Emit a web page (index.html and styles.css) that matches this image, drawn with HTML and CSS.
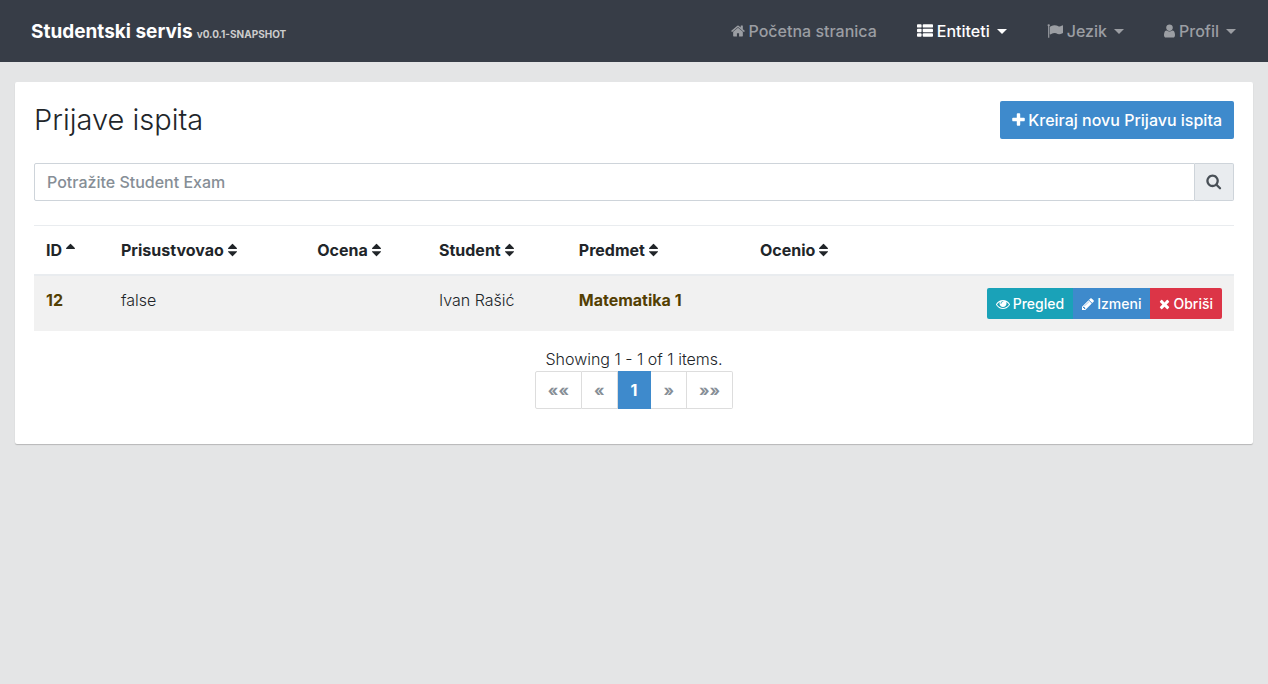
FILE: index.html
```html
<!DOCTYPE html>
<html lang="sr-Latn">
<head>
<meta charset="utf-8">
<meta name="viewport" content="width=device-width, initial-scale=1">
<title>Prijave ispita</title>
<link rel="stylesheet" href="styles.css">
</head>
<body>
<svg class="sprite" aria-hidden="true">
  <symbol id="home" viewBox="64 0 1664 1792"><path d="M1472 992v480q0 26-19 45t-45 19h-384v-384h-256v384h-384q-26 0-45-19t-19-45v-480q0-1 .5-3t.5-3l575-474 575 474q1 2 1 6zm223-69l-62 74q-8 9-21 11h-3q-13 0-21-7l-692-577-692 577q-12 8-24 7-13-2-21-11l-62-74q-8-10-7-23.5t11-21.5l719-599q32-26 76-26t76 26l244 204v-195q0-14 9-23t23-9h192q14 0 23 9t9 23v408l219 182q10 8 11 21.5t-7 23.5z"/></symbol>
  <symbol id="list" viewBox="0 0 1792 1792"><rect x="0" y="128" width="512" height="384" rx="96"/><rect x="0" y="640" width="512" height="384" rx="96"/><rect x="0" y="1152" width="512" height="384" rx="96"/><rect x="640" y="128" width="1152" height="384" rx="96"/><rect x="640" y="640" width="1152" height="384" rx="96"/><rect x="640" y="1152" width="1152" height="384" rx="96"/></symbol>
  <symbol id="flag" viewBox="0 0 1792 1792"><path d="M320 256q0 72-64 110v1266q0 13-9.500 22.500t-22.500 9.500h-64q-13 0-22.500-9.500t-9.500-22.500v-1266q-64-38-64-110 0-53 37.500-90.500t90.500-37.500 90.500 37.500 37.500 90.500zm1472 64v763q0 25-12.500 38.500t-39.500 27.500q-215 116-369 116-61 0-123.500-22t-108.500-48-115.500-48-142.500-22q-192 0-464 146-17 9-33 9-26 0-45-19t-19-45v-742q0-32 31-55 21-14 79-43 236-120 421-120 107 0 200 29t219 88q38 19 88 19 54 0 117.500-21t110-47 88-47 54.500-21q26 0 45 19t19 45z"/></symbol>
  <symbol id="user" viewBox="256 0 1280 1792"><path d="M1536 1399q0 109-62.500 187t-150.500 78h-854q-88 0-150.500-78t-62.500-187q0-85 8.500-160.500t31.500-152 58.500-131 94-89 134.500-34.500q131 128 313 128t313-128q76 0 134.500 34.500t94 89 58.500 131 31.500 152 8.500 160.500zm-256-887q0 159-112.500 271.500t-271.500 112.500-271.500-112.500-112.500-271.500 112.500-271.500 271.500-112.500 271.500 112.500 112.500 271.500z"/></symbol>
  <symbol id="plus" viewBox="192 0 1408 1792"><path d="M1600 736v192q0 40-28 68t-68 28h-416v416q0 40-28 68t-68 28h-192q-40 0-68-28t-28-68v-416h-416q-40 0-68-28t-28-68v-192q0-40 28-68t68-28h416v-416q0-40 28-68t68-28h192q40 0 68 28t28 68v416h416q40 0 68 28t28 68z"/></symbol>
  <symbol id="search" viewBox="64 64 1728 1792"><path d="M1216 832q0-185-131.500-316.500t-316.500-131.500-316.500 131.500-131.500 316.500 131.500 316.500 316.500 131.500 316.500-131.500 131.500-316.500zm512 832q0 52-38 90t-90 38q-54 0-90-38l-343-342q-179 124-399 124-143 0-273.500-55.500t-225-150-150-225-55.500-273.500 55.500-273.500 150-225 225-150 273.500-55.500 273.500 55.500 225 150 150 225 55.500 273.500q0 220-124 399l343 343q37 37 37 90z"/></symbol>
  <symbol id="sort" viewBox="384 0 1024 1792"><path d="M1408 1088q0 26-19 45l-448 448q-19 19-45 19t-45-19l-448-448q-19-19-19-45t19-45 45-19h896q26 0 45 19t19 45zm0-384q0 26-19 45t-45 19h-896q-26 0-45-19t-19-45 19-45l448-448q19-19 45-19t45 19l448 448q19 19 19 45z"/></symbol>
  <symbol id="sort-asc" viewBox="384 0 1024 1792"><path d="M1408 704q0 26-19 45t-45 19h-896q-26 0-45-19t-19-45 19-45l448-448q19-19 45-19t45 19l448 448q19 19 19 45z"/></symbol>
  <symbol id="eye" viewBox="0 0 1792 1792"><path d="M1664 960q-152-236-381-353 61 104 61 225 0 185-131.500 316.500t-316.500 131.500-316.500-131.500-131.500-316.500q0-121 61-225-229 117-381 353 133 205 333.500 326.500t434.500 121.500 434.500-121.500 333.500-326.500zm-720-384q0-20-14-34t-34-14q-125 0-214.500 89.500t-89.500 214.500q0 20 14 34t34 14 34-14 14-34q0-86 61-147t147-61q20 0 34-14t14-34zm848 384q0 34-20 69-140 230-376.500 368.500t-499.500 138.500-499.500-139-376.500-368q-20-35-20-69t20-69q140-229 376.500-368t499.500-139 499.500 139 376.500 368q20 35 20 69z"/></symbol>
  <symbol id="pencil" viewBox="128 0 1536 1792"><path d="M491 1536l91-91-235-235-91 91v107h128v128h107zm523-928q0-22-22-22-10 0-17 7l-542 542q-7 7-7 17 0 22 22 22 10 0 17-7l542-542q7-7 7-17zm-54-192l416 416-832 832h-416v-416zm683 96q0 53-37 90l-166 166-416-416 166-165q36-38 90-38 53 0 91 38l235 234q37 39 37 91z"/></symbol>
  <symbol id="times" viewBox="192 0 1408 1792"><path d="M1490 1322q0 40-28 68l-136 136q-28 28-68 28t-68-28l-294-294-294 294q-28 28-68 28t-68-28l-136-136q-28-28-28-68t28-68l294-294-294-294q-28-28-28-68t28-68l136-136q28-28 68-28t68 28l294 294 294-294q28-28 68-28t68 28l136 136q28 28 28 68t-28 68l-294 294 294 294q28 28 28 68z"/></symbol>
</svg>

<header class="navbar">
  <a class="brand" href="#"><span class="brand-name">Studentski servis</span> <span class="brand-version">v0.0.1-SNAPSHOT</span></a>
  <nav class="nav">
    <a class="nav-link" href="#"><svg class="icon icon-14"><use href="#home"/></svg>Početna stranica</a>
    <button class="nav-link active" type="button"><svg class="icon icon-16"><use href="#list"/></svg>Entiteti<span class="caret"></span></button>
    <button class="nav-link" type="button"><svg class="icon icon-16"><use href="#flag"/></svg>Jezik<span class="caret"></span></button>
    <button class="nav-link" type="button"><svg class="icon icon-11"><use href="#user"/></svg>Profil<span class="caret"></span></button>
  </nav>
</header>

<main class="card">
  <div class="card-head">
    <h1 class="title">Prijave ispita</h1>
    <button class="btn btn-primary" type="button"><svg class="icon icon-13"><use href="#plus"/></svg>Kreiraj novu Prijavu ispita</button>
  </div>

  <form class="search">
    <input class="search-input" type="text" placeholder="Potražite Student Exam" aria-label="Potražite Student Exam">
    <button class="search-btn" type="button" aria-label="Pretraga"><svg class="icon icon-16"><use href="#search"/></svg></button>
  </form>

  <table class="table">
    <thead>
      <tr>
        <th class="col-id">ID <svg class="icon icon-9"><use href="#sort-asc"/></svg></th>
        <th class="col-present">Prisustvovao <svg class="icon icon-9"><use href="#sort"/></svg></th>
        <th class="col-grade">Ocena <svg class="icon icon-9"><use href="#sort"/></svg></th>
        <th class="col-student">Student <svg class="icon icon-9"><use href="#sort"/></svg></th>
        <th class="col-subject">Predmet <svg class="icon icon-9"><use href="#sort"/></svg></th>
        <th class="col-grader">Ocenio <svg class="icon icon-9"><use href="#sort"/></svg></th>
        <th></th>
      </tr>
    </thead>
    <tbody>
      <tr>
        <td><a class="link" href="#">12</a></td>
        <td>false</td>
        <td></td>
        <td>Ivan Rašić</td>
        <td><a class="link" href="#">Matematika 1</a></td>
        <td></td>
        <td class="actions">
          <div class="btn-group">
            <button class="btn btn-sm btn-info" type="button"><svg class="icon icon-14"><use href="#eye"/></svg>Pregled</button>
            <button class="btn btn-sm btn-primary" type="button"><svg class="icon icon-12"><use href="#pencil"/></svg>Izmeni</button>
            <button class="btn btn-sm btn-danger" type="button"><svg class="icon icon-11"><use href="#times"/></svg>Obriši</button>
          </div>
        </td>
      </tr>
    </tbody>
  </table>

  <footer class="pager">
    <div>Showing 1 - 1 of 1 items.</div>
    <nav class="pagination" aria-label="Stranice">
      <a class="page" href="#">««</a>
      <a class="page" href="#">«</a>
      <a class="page current" href="#">1</a>
      <a class="page" href="#">»</a>
      <a class="page" href="#">»»</a>
    </nav>
  </footer>
</main>
</body>
</html>
```
FILE: styles.css
```css
* {
  box-sizing: border-box;
}

body {
  margin: 0;
  background: #e4e5e6;
  color: #212529;
  font: 300 16px/24px Inter, "Liberation Sans", sans-serif;
}

button,
input {
  font: inherit;
}

button {
  cursor: pointer;
}

a {
  text-decoration: none;
}

.sprite {
  display: none;
}

.icon {
  height: 16px;
  fill: currentColor;
  flex: none;
}

.icon-9 { width: 9px; }
.icon-11 { width: 11px; }
.icon-12 { width: 12px; }
.icon-13 { width: 13px; }
.icon-14 { width: 14px; }
.icon-16 { width: 16px; }

/* Top bar */
.navbar {
  display: flex;
  align-items: center;
  justify-content: space-between;
  min-height: 62px;
  padding: 0 32px 0 31px;
  background: #373d47;
}

.brand {
  display: flex;
  align-items: baseline;
  gap: 4px;
  padding-top: 4px;
  color: #fff;
  font-weight: 700;
}

.brand-name {
  font-size: 19px;
}

.brand-version {
  color: #ccc;
  font-size: 10px;
}

.nav {
  display: flex;
  gap: 40px;
}

.nav-link {
  display: flex;
  align-items: center;
  gap: 4px;
  padding: 0;
  border: 0;
  background: none;
  color: #9b9ea3;
  font-size: 16px;
  font-weight: 500;
}

.nav-link.active {
  color: #fff;
}

.caret {
  margin-left: 3px;
  border: 5px solid transparent;
  border-top-color: currentColor;
  border-bottom: 0;
}

/* Content card */
.card {
  margin: 20px 15px;
  padding: 19px 19px 35px;
  border-radius: 2px;
  background: #fff;
  box-shadow: 0 1px 1px rgba(0, 0, 0, 0.2);
}

.card-head {
  display: flex;
  align-items: center;
  justify-content: space-between;
  margin-bottom: 24px;
}

.title {
  margin: 0;
  font-size: 29px;
  line-height: 38px;
  font-weight: 300;
}

.btn {
  display: flex;
  align-items: center;
  gap: 3px;
  padding: 7px 12px;
  border: 0;
  border-radius: 2px;
  color: #fff;
  font-weight: 500;
}

.btn-primary { background: #3e8acc; }
.btn-info { background: #1aa2b8; }
.btn-danger { background: #dc3547; }

.btn-sm {
  padding: 5px 9px;
  border-radius: 0;
  font-size: 14px;
  line-height: 21px;
}

.btn-sm .icon {
  height: 14px;
}

.btn-group {
  display: inline-flex;
  border-radius: 2px;
  overflow: hidden;
  vertical-align: top;
}

.search {
  display: flex;
  height: 38px;
  margin-bottom: 24px;
}

.search-input {
  flex: 1;
  min-width: 0;
  padding: 0 12px;
  border: 1px solid #ced4da;
  border-radius: 2px 0 0 2px;
  color: #495057;
  font-weight: 500;
}

.search-input::placeholder {
  color: #868e96;
  opacity: 1;
}

.search-btn {
  display: flex;
  align-items: center;
  padding: 0 11px;
  border: 1px solid #ced4da;
  border-left: 0;
  border-radius: 0 2px 2px 0;
  background: #e9ecef;
  color: #495057;
}

/* Exam table */
.table {
  width: 100%;
  margin-bottom: 16px;
  border-spacing: 0;
  table-layout: fixed;
}

.table th,
.table td {
  padding: 12px;
  text-align: left;
  vertical-align: top;
  white-space: nowrap;
}

.table th {
  border-top: 1px solid #e9ecef;
  border-bottom: 2px solid #e9ecef;
  font-weight: 700;
}

.table th .icon {
  vertical-align: -2px;
}

.table td {
  background: #f1f1f1;
}

.table .actions {
  text-align: right;
}

.col-id { width: 6.25%; }
.col-present { width: 16.35%; }
.col-grade { width: 10.15%; }
.col-student { width: 11.65%; }
.col-subject { width: 15.1%; }
.col-grader { width: 12%; }

.link {
  color: #533f03;
  font-weight: 700;
}

/* Paging */
.pager {
  display: flex;
  flex-direction: column;
  align-items: center;
}

.pagination {
  display: flex;
}

.page {
  padding: 6px 12px;
  border: 1px solid #ddd;
  border-left: 0;
  color: #868e96;
  font-weight: 700;
}

.page:first-child {
  border-left: 1px solid #ddd;
  border-radius: 2px 0 0 2px;
}

.page:last-child {
  border-radius: 0 2px 2px 0;
}

.page.current {
  padding: 6px 13px;
  border-color: #3e8acc;
  background: #3e8acc;
  color: #fff;
}
```
